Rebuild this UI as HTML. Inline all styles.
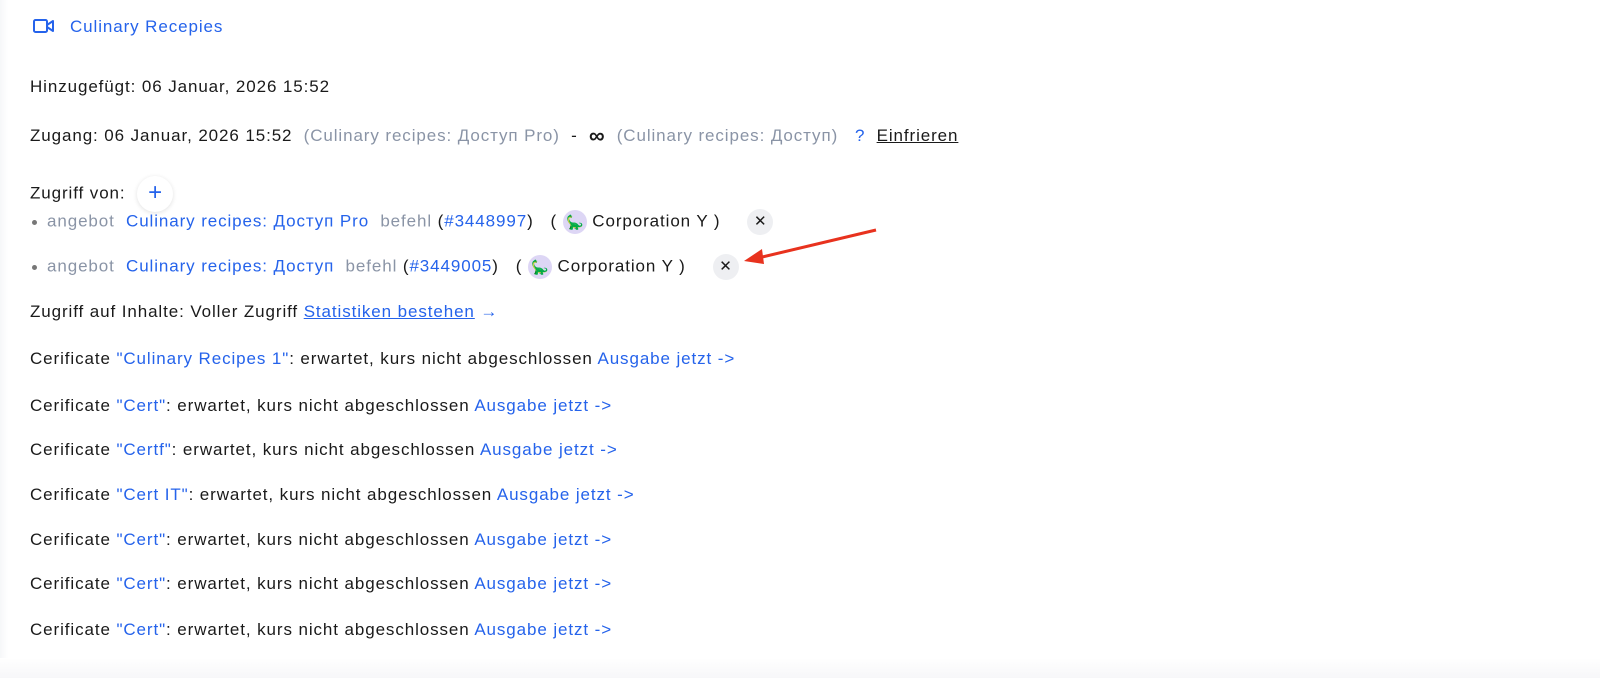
<!DOCTYPE html>
<html><head><meta charset="utf-8"><style>
body{margin:0;width:1600px;height:678px;background:#fff;font-family:"Liberation Sans",Arial,sans-serif;font-size:17px;letter-spacing:0.9px;color:#1a1a1a;position:relative;overflow:hidden}
.edge{position:absolute;left:0;top:0;width:8px;height:678px;background:linear-gradient(90deg,#f6f7f9,#fff)}
.bot{position:absolute;left:0;right:0;top:658px;height:20px;background:linear-gradient(#fff,#f7f7f9)}
.l{position:absolute;left:30px;white-space:nowrap;line-height:20px}
.b{color:#2563eb}.g{color:#8a94a6}
a{color:#2563eb;text-decoration:none}
u{text-decoration:underline}
.x{display:inline-block;width:26px;height:26px;border-radius:50%;background:#eeeff2;text-align:center;line-height:26px;font-size:15px;vertical-align:middle;letter-spacing:0;margin-left:10px}
.av{display:inline-block;width:24px;height:24px;border-radius:50%;background:#ddd6f5;vertical-align:middle;text-align:center;line-height:24px;font-size:14px;color:#2e7d32;letter-spacing:0}
.dot{display:inline-block;width:5px;height:5px;border-radius:50%;background:#777;vertical-align:middle;margin-right:10px;margin-left:2px}
</style></head><body>
<div class="edge"></div><div class="bot"></div>
<div class="l" style="top:17px">
<svg width="22" height="16" viewBox="0 0 22 16" style="vertical-align:-2px;margin-left:3px;margin-right:15px"><rect x="1" y="2" width="13" height="12" rx="1.5" fill="none" stroke="#2563eb" stroke-width="2"/><path d="M14 7 L20 3 V13 L14 9" fill="none" stroke="#2563eb" stroke-width="2" stroke-linejoin="round"/></svg><span class="b" style="font-size:17px">Culinary Recepies</span></div>
<div class="l" style="top:77px">Hinzugefügt: 06 Januar, 2026 15:52</div>
<div class="l" style="top:126px">Zugang: 06 Januar, 2026 15:52 &nbsp;<span class="g">(Culinary recipes: Доступ Pro)</span> &nbsp;- &nbsp;<b style="font-size:22px;vertical-align:-2px">∞</b> &nbsp;<span class="g">(Culinary recipes: Доступ)</span> &nbsp;&nbsp;<span class="b">?</span> &nbsp;<u>Einfrieren</u></div>
<div class="l" style="top:176px">Zugriff von: <span style="display:inline-block;width:36px;height:36px;border-radius:50%;background:#fff;box-shadow:0 1px 5px rgba(0,0,0,.12);text-align:center;line-height:34px;color:#2563eb;font-size:24px;vertical-align:middle;margin-left:6px;letter-spacing:0">+</span></div>
<div class="l" style="top:209px"><span class="dot"></span><span class="g">angebot</span> &nbsp;<a>Culinary recipes: Доступ Pro</a> &nbsp;<span class="g">befehl</span> (<a>#3448997</a>) &nbsp;&nbsp;( <span class="av">🦕</span> Corporation Y ) &nbsp;&nbsp;<span class="x">✕</span></div>
<div class="l" style="top:254px"><span class="dot"></span><span class="g">angebot</span> &nbsp;<a>Culinary recipes: Доступ</a> &nbsp;<span class="g">befehl</span> (<a>#3449005</a>) &nbsp;&nbsp;( <span class="av">🦕</span> Corporation Y ) &nbsp;&nbsp;<span class="x">✕</span></div>
<svg style="position:absolute;left:740px;top:225px" width="140" height="40"><line x1="136" y1="5" x2="18" y2="33" stroke="#e8321e" stroke-width="3"/><path d="M4 36 L22 24 L24 39 Z" fill="#e8321e"/></svg>
<div class="l" style="top:302px">Zugriff auf Inhalte: Voller Zugriff <a><u>Statistiken bestehen</u> →</a></div>
<div class="l" style="top:349px">Cerificate <a>"Culinary Recipes 1"</a>: erwartet, kurs nicht abgeschlossen <a>Ausgabe jetzt -&gt;</a></div>
<div class="l" style="top:396px">Cerificate <a>"Cert"</a>: erwartet, kurs nicht abgeschlossen <a>Ausgabe jetzt -&gt;</a></div>
<div class="l" style="top:440px">Cerificate <a>"Certf"</a>: erwartet, kurs nicht abgeschlossen <a>Ausgabe jetzt -&gt;</a></div>
<div class="l" style="top:485px">Cerificate <a>"Cert IT"</a>: erwartet, kurs nicht abgeschlossen <a>Ausgabe jetzt -&gt;</a></div>
<div class="l" style="top:530px">Cerificate <a>"Cert"</a>: erwartet, kurs nicht abgeschlossen <a>Ausgabe jetzt -&gt;</a></div>
<div class="l" style="top:574px">Cerificate <a>"Cert"</a>: erwartet, kurs nicht abgeschlossen <a>Ausgabe jetzt -&gt;</a></div>
<div class="l" style="top:620px">Cerificate <a>"Cert"</a>: erwartet, kurs nicht abgeschlossen <a>Ausgabe jetzt -&gt;</a></div>
</body></html>
